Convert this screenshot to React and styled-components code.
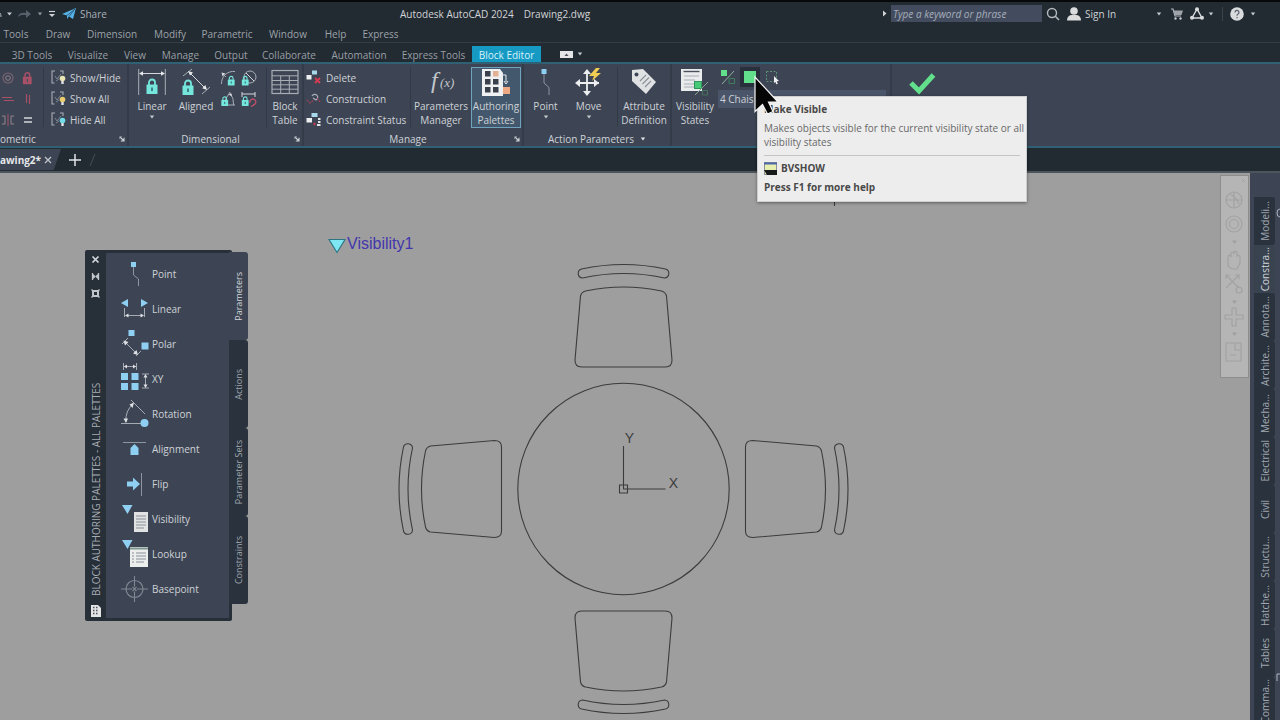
import React from "react";
import styled, { createGlobalStyle, css } from "styled-components";

const c = {
  bar: "#222a32",
  ribbon: "#3d4554",
  line: "#2f6073",
  dark: "#2a323d",
  canvas: "#9e9e9e",
  text: "#ced2d7",
  mint: "#74e6dc",
  green: "#62e08b",
  sky: "#8fd0f2",
  pink: "#a94f66",
};

const Global = createGlobalStyle`
  *, *::before, *::after { box-sizing: border-box; }
  html, body, #root { height: 100%; }
  body { margin: 0; overflow: hidden; background: ${c.bar}; }
  body, button, input, select {
    font-family: "Open Sans", "Noto Sans", sans-serif;
    font-size: 10px;
    line-height: 14px;
    color: ${c.text};
  }
  button { margin: 0; padding: 0; border: 0; background: none; white-space: nowrap; }
  svg { display: block; flex: none; }
`;

const Shell = styled.div`
  display: flex;
  flex-direction: column;
  height: 100vh;
  overflow: hidden;
`;

/* ---------- title bar ---------- */
const TitleBar = styled.header`
  display: grid;
  grid-template-columns: 400px 1fr auto;
  align-items: center;
  height: 25px;
  border-top: 2px solid #06080a;
  background: ${c.bar};
`;
const QuickAccess = styled.div`
  display: flex;
  align-items: center;
`;
const Slot = styled.button`
  display: flex;
  flex: none;
  align-items: center;
  justify-content: center;
  width: ${(p) => p.$w}px;
  height: 18px;
`;
const ShareButton = styled.button`
  display: flex;
  align-items: center;
  gap: 3px;
  padding-left: 4px;
  color: #a9b0b8;
`;
const DocTitle = styled.h1`
  display: flex;
  gap: 10px;
  margin: 0;
  font-size: 10px;
  font-weight: 400;
  white-space: nowrap;
  color: #d2d4d6;
`;
const Account = styled.div`
  display: flex;
  align-items: center;
  padding-right: 18px;
`;
const Search = styled.input`
  width: 151px;
  height: 17px;
  padding: 0 2px;
  border: 0;
  background: #434c5e;
  font-style: italic;
  &::placeholder { color: #a5aebb; opacity: 1; }
`;
const SignIn = styled.button`
  display: flex;
  align-items: center;
  gap: 4px;
  width: 86px;
  padding-left: 3px;
`;
const Divider = styled.span`
  width: 16px;
  height: 14px;
  background: linear-gradient(#39424d, #39424d) center / 1px 100% no-repeat;
`;

/* ---------- menu and ribbon tabs ---------- */
const MenuBar = styled.nav`
  display: flex;
  align-items: center;
  height: 18px;
  border-bottom: 1px solid #343d46;
  background: ${c.bar};
`;
const MenuItem = styled.button`
  width: ${(p) => p.$w}px;
  text-align: center;
  color: #9da3a9;
`;
const TabBar = styled.div`
  display: flex;
  height: 21px;
  padding: 3px 0 0 4px;
  border-bottom: 2px solid ${c.line};
  background: ${c.bar};
`;
const RibbonTab = styled.button`
  flex: none;
  width: ${(p) => p.$w}px;
  padding-top: 1px;
  text-align: center;
  color: #999fa5;
  ${(p) =>
    p.$active &&
    css`
      background: #169ac4;
      color: #d6f1fa;
    `}
`;
const TabOptions = styled.button`
  display: flex;
  align-items: center;
  gap: 4px;
  margin-left: 19px;
`;

/* ---------- ribbon ---------- */
const Ribbon = styled.div`
  position: relative;
  z-index: 3;
  display: flex;
  height: 84px;
  background: ${c.ribbon};
  border-bottom: 2px solid ${c.line};
`;
const Panel = styled.section`
  position: relative;
  display: flex;
  flex-direction: column;
  flex: ${(p) => (p.$w ? `none` : `1`)};
  width: ${(p) => (p.$w ? `${p.$w}px` : "auto")};
  border-right: ${(p) => (p.$w ? "2px solid #343b49" : "0")};
`;
const PanelBody = styled.div`
  display: flex;
  height: 68px;
  padding-top: 3px;
`;
const PanelTitle = styled.div`
  position: relative;
  display: flex;
  align-items: center;
  justify-content: ${(p) => (p.$start ? "flex-start" : "center")};
  gap: 6px;
  height: 14px;
  padding-right: ${(p) => (p.$launcher ? 10 : 0)}px;
`;
const Launcher = styled.button`
  position: absolute;
  right: 2px;
  top: 4px;
`;
const SepSlot = styled.span`
  padding-left: 7px;
`;
const Sep = styled.i`
  display: block;
  flex: none;
  width: 1px;
  height: 60px;
  background: #333a47;
`;
const Big = styled.button`
  display: flex;
  flex: none;
  flex-direction: column;
  align-items: center;
  width: ${(p) => p.$w}px;
  height: 61px;
  border: 1px solid ${(p) => (p.$on ? "#6fa3be" : "transparent")};
  background: ${(p) => (p.$on ? "#43586c" : "transparent")};
  text-align: center;
`;
const BigLabel = styled.span`
  margin: 3px 0 2px;
  white-space: pre-line;
`;
const SmallGrid = styled.div`
  display: grid;
  grid-template-columns: repeat(2, ${(p) => p.$size}px);
  grid-auto-rows: 21px;
  place-items: center;
  align-content: start;
`;
const Rows = styled.div`
  display: flex;
  flex-direction: column;
  width: ${(p) => p.$w}px;
`;
const RowButton = styled.button`
  display: flex;
  align-items: center;
  gap: 4px;
  height: 21px;
  padding-left: ${(p) => p.$left}px;
`;
const StateTools = styled.div`
  display: flex;
  flex-direction: column;
  gap: 3px;
`;
const ToolLine = styled.div`
  display: flex;
  gap: 2px;
`;
const Tool = styled.button`
  display: grid;
  place-items: center;
  width: 20px;
  height: 20px;
  background: ${(p) => (p.$on ? "#27303b" : "transparent")};
`;
const StateSelect = styled.select`
  width: 168px;
  height: 18px;
  padding: 0 2px;
  border: 0;
  appearance: none;
  background: #4b5569;
`;
const CloseEditor = styled.button`
  display: grid;
  place-items: center;
  width: 60px;
  height: 32px;
`;

/* ---------- tooltip ---------- */
const Tooltip = styled.div`
  position: absolute;
  left: 85px;
  top: 32px;
  width: 270px;
  height: 106px;
  padding: 5px 6px 0;
  border: 1px solid #cfcfcf;
  background: #ededed;
  box-shadow: 0 1px 3px rgba(0, 0, 0, 0.4);
  color: #686868;
  white-space: nowrap;
`;
const TipTitle = styled.strong`
  display: block;
  color: #484848;
`;
const TipText = styled.p`
  margin: 5px 0 6px;
`;
const TipCommand = styled.div`
  display: flex;
  align-items: center;
  gap: 4px;
  height: 25px;
  border-top: 1px solid #c2c5c6;
  font-weight: 700;
  color: #484848;
`;
const Pointer = styled.svg`
  position: absolute;
  left: 81px;
  top: 11px;
`;

/* ---------- document tabs ---------- */
const DocTabs = styled.div`
  display: flex;
  align-items: center;
  height: 25px;
  background: ${c.bar};
  border-bottom: 2px solid #4e545b;
`;
const DocTab = styled.div`
  display: flex;
  align-items: center;
  gap: 3px;
  width: 61px;
  height: 21px;
  background: #3d4554;
  clip-path: polygon(0 0, 100% 0, 88% 100%, 0 100%);
  font-weight: 700;
  color: #e5e7e9;
`;

/* ---------- workspace ---------- */
const Workspace = styled.main`
  display: flex;
  flex: 1;
  min-height: 0;
`;
const Canvas = styled.div`
  position: relative;
  flex: 1;
  overflow: hidden;
  background: ${c.canvas};
`;
const Drawing = styled.svg`
  position: absolute;
  left: 0;
  top: 0;
`;
const NavBar = styled.div`
  position: absolute;
  right: 1px;
  top: 2px;
  width: 29px;
  height: 203px;
  border: 1px solid #8d8d8d;
  background: #b5b5b5;
`;

const Palette = styled.aside`
  position: absolute;
  left: 85px;
  top: 77px;
  display: flex;
  align-items: flex-start;
`;
const PaletteFrame = styled.div`
  display: flex;
  width: 147px;
  height: 371px;
  padding: 3px 3px 3px 0;
  border-radius: 2px;
  background: #272f39;
`;
const Rail = styled.div`
  display: flex;
  flex-direction: column;
  align-items: center;
  gap: 8px;
  width: 21px;
  padding-top: 2px;
`;
const Sideways = styled.span`
  writing-mode: vertical-rl;
  transform: rotate(180deg);
  white-space: nowrap;
  font-size: ${(p) => p.$size || 9}px;
  line-height: 14px;
`;
const RailTitle = styled(Sideways)`
  flex: 1;
  color: #a8adb3;
`;
const PaletteList = styled.div`
  flex: 1;
  padding-top: 3px;
  background: ${c.ribbon};
`;
const PaletteItem = styled.button`
  display: flex;
  align-items: center;
  gap: 3px;
  width: 100%;
  height: 35px;
  padding-left: 15px;
`;
const PaletteTabs = styled.div`
  position: relative;
  width: 19px;
  margin: 2px 0 0 -3px;
`;
const SideTab = styled.button`
  display: grid;
  place-items: center;
  width: 100%;
  height: ${(p) => p.$h}px;
  overflow: hidden;
  border-radius: 0 3px 3px 0;
  background: ${(p) => (p.$on ? p.$tone || c.ribbon : c.dark)};
  color: ${(p) => (p.$on ? "#d2d6da" : "#a0a7b0")};
`;

const Dock = styled.aside`
  display: flex;
  width: 30px;
  padding-left: 4px;
  overflow: hidden;
  background: ${c.ribbon};
`;
const DockTabs = styled.div`
  flex: none;
  width: 21px;
  padding-top: 24px;
`;
const DockBody = styled.div`
  display: flex;
  flex-direction: column;
  flex: 1;
  justify-content: space-between;
  padding: 32px 0 38px 1px;
  overflow: hidden;
`;

/* ---------- drawings ---------- */
const Caret = ({ color = "#c6cacf" }) => (
  <svg width="6" height="4" viewBox="0 0 6 4" aria-hidden="true">
    <path d="M0.8 0.5h4.4L3 3.4z" fill={color} />
  </svg>
);
const Art = ({ w, h, children, ...rest }) => (
  <svg width={w} height={h} viewBox={`0 0 ${w} ${h}`} fill="none" aria-hidden="true" {...rest}>
    {children}
  </svg>
);
const Lock = ({ x, y, s = 1, color = c.mint }) => (
  <g transform={`translate(${x} ${y}) scale(${s})`}>
    <path d="M3 7V4.5a3 3 0 0 1 6 0V7" stroke={color} strokeWidth="1.8" fill="none" />
    <rect x="0.5" y="6.5" width="11" height="9.5" rx="0.6" fill={color} />
    <path d="M6 9.5v3.5" stroke="#2b5560" strokeWidth="1.4" />
  </g>
);
const LauncherIcon = () => (
  <Art w={6} h={6}>
    <path d="M1 1l4 4M5 1.8V5H1.8" stroke="#d0d4d8" strokeWidth="1.1" />
    <path d="M0.6 3V0.6H3" stroke="#8b929c" strokeWidth="0.8" />
  </Art>
);
const LinearIcon = () => (
  <Art w={28} h={28}>
    <path d="M0.7 1v26M27.3 1v26" stroke="#a9adb5" />
    <path d="M2 5.5h24" stroke="#d5d8dc" />
    <path d="M1 5.5l4-2.2v4.4zM27 5.5l-4-2.2v4.4z" fill="#e6e8ea" />
    <Lock x={8} y={10} />
  </Art>
);
const AlignedIcon = () => (
  <Art w={30} h={28}>
    <path d="M2 8l9-7M21 26l8-7" stroke="#a9adb5" />
    <path d="M9 5l15 15" stroke="#d5d8dc" />
    <path d="M7 3l5 1.6-3 3zM26 22l-1.6-5-3.2 3.2z" fill="#e6e8ea" />
    <Lock x={1} y={11} />
  </Art>
);
const RadialIcon = () => (
  <Art w={16} h={16}>
    <path d="M1.5 14A12 12 0 0 1 15 1.5M2 3l4 4" stroke="#a9adb5" />
    <path d="M1.5 2.5l4 1-3 3z" fill="#d5d8dc" />
    <Lock x={7.5} y={5.5} s={0.62} />
  </Art>
);
const DiameterIcon = () => (
  <Art w={16} h={16}>
    <circle cx="9" cy="7" r="6" stroke="#a9adb5" />
    <path d="M5 3l8 8" stroke="#d5d8dc" />
    <Lock x={0.5} y={5.5} s={0.62} />
  </Art>
);
const AngularIcon = () => (
  <Art w={16} h={16}>
    <path d="M10 1L2 14h13M10 2q4 5 3.6 12" stroke="#a9adb5" />
    <path d="M8.5 3.5l3-1 .5 3z" fill="#d5d8dc" />
    <Lock x={1} y={5} s={0.62} />
  </Art>
);
const ConvertIcon = () => (
  <Art w={16} h={16}>
    <path d="M1 1v5M14 1v5M1 3h13" stroke="#d5d8dc" />
    <path d="M9 12a3 3 0 1 1 3 2M13 14l-3 1.5M12 14" stroke="#c4506a" strokeWidth="1.3" />
    <Lock x={0.5} y={5} s={0.62} />
  </Art>
);
const TableIcon = () => (
  <Art w={28} h={28}>
    <rect x="1" y="2.5" width="26" height="23" stroke="#a9adb5" strokeWidth="1.2" />
    <path d="M1 7.8h26M1 12.5h26M1 16.8h26M1 21.2h26M9.7 7.8v17.7M18.3 7.8v17.7" stroke="#a9adb5" />
  </Art>
);
const BulbRow = ({ bulb }) => (
  <Art w={15} h={15}>
    <path d="M4 1H1v12h2.5M9 1h3v3" stroke="#a9adb5" strokeWidth="1.1" />
    <path d="M4 6l2 3 4-5M5 11l3-2" stroke="#7c8592" />
    <circle cx="11.5" cy="8.5" r="2.8" fill={bulb} />
    <path d="M10.3 11h2.4v3h-2.4z" fill="#e1e3e5" />
  </Art>
);
const DeleteIcon = () => (
  <Art w={16} h={15}>
    <rect x="6" y="0.5" width="5" height="4" fill="#a9d8ea" />
    <rect x="0.5" y="5" width="5" height="4.5" fill="#eceef0" />
    <path d="M9 8l5 5M14 8l-5 5" stroke="#d13c52" strokeWidth="2" />
  </Art>
);
const ConstructionIcon = () => (
  <Art w={16} h={15}>
    <path d="M6 5a3 3 0 1 1 4 4M7 7l3 2" stroke="#aab0bb" strokeWidth="1.2" />
    <path d="M1 9l3 3 4-3M11 7l3 4" stroke="#a8415a" strokeWidth="1.1" strokeDasharray="2 1" />
  </Art>
);
const StatusIcon = () => (
  <Art w={16} h={15}>
    <rect x="5.5" y="1" width="6" height="4" fill="#a9d8ea" />
    <rect x="0.5" y="6" width="5.5" height="4.5" fill="#eceef0" />
    <path d="M7.5 12h2" stroke="#d13c52" strokeWidth="2.4" />
    <path d="M12 7h2.5M12 10h2.5M11 13h3.5" stroke="#e1e3e5" strokeWidth="1.8" />
  </Art>
);
const FxIcon = () => (
  <Art w={34} h={28} fill="#c3c7cd" fontFamily="Liberation Serif, serif" fontStyle="italic">
    <text x="7" y="20" fontSize="24">f</text>
    <text x="16" y="19" fontSize="13">(x)</text>
  </Art>
);
const AuthoringIcon = () => (
  <Art w={30} h={28}>
    <path d="M1 1h18l3 4v23H1z" fill="#eef0f1" />
    {[4, 12, 20].map((y, r) =>
      [4, 12].map((x, k) => (
        <rect key={`${x}-${y}`} x={x} y={y - 1} width="5.5" height="5.5" fill={r === 0 && k === 1 ? "#e3b295" : "#39404c"} />
      ))
    )}
    <path d="M20 7h5v7M23 13l2 3 2-3" stroke="#e8eaec" />
    <rect x="22" y="19" width="7" height="7" fill="#f0aa83" />
  </Art>
);
const PointIcon = () => (
  <Art w={14} h={28}>
    <rect x="2.5" y="1" width="5" height="5" fill={c.sky} />
    <path d="M5 6v9l5 4.5V27" stroke="#8d95a0" />
  </Art>
);
const MoveIcon = () => (
  <Art w={28} h={28}>
    <path d="M12 4v22M2 15h22" stroke="#eceef0" strokeWidth="1.8" />
    <path d="M12 1l4 5H8zM12 28l4-5H8zM0 15l5-4v8zM24 15l-5-4v8z" fill="#eceef0" />
    <path d="M21 0l-7 8h5l-2 5 9-8h-5l4-5z" fill="#f1cd53" />
  </Art>
);
const TagIcon = () => (
  <Art w={28} h={28}>
    <path d="M2 2l11-1 13 13-10 12L2 13z" fill="#dfe1e3" />
    <circle cx="6.5" cy="6.5" r="2" fill="#3d4554" />
    <path d="M10 13l6-6M12.5 16l6.5-6.5M15 19l6-6" stroke="#8b9097" strokeWidth="1.1" />
  </Art>
);
const VisibilityIcon = () => (
  <Art w={30} h={28}>
    <path d="M1 1h21v22H1z" fill="#e9ebec" />
    <path d="M3.5 3.5h16" stroke="#4a515c" strokeWidth="1.4" />
    <path d="M4 8h15M4 12h11M4 16h10M4 19h10" stroke="#a8acb1" />
    <rect x="14.5" y="13.5" width="7" height="7" fill="#48c978" stroke="#2f9658" />
    <path d="M15 27L28 14" stroke="#81a28f" />
    <path d="M22.5 22.5h5v4.5h-5z" stroke="#45705b" />
  </Art>
);
const ModeIcon = () => (
  <Art w={16} h={16}>
    <rect x="1" y="1" width="6" height="6" fill={c.green} />
    <path d="M2 15L14 2" stroke="#8cb39b" />
    <path d="M9 9.5h5.5v5H9z" stroke="#3f7d5c" />
  </Art>
);
const ShowIcon = () => (
  <Art w={14} h={14}>
    <rect x="1" y="1" width="12" height="12" fill={c.green} />
  </Art>
);
const HideIcon = () => (
  <Art w={15} h={16}>
    <rect x="1.5" y="2.5" width="10" height="10" stroke="#5b9276" strokeDasharray="2 1.5" />
    <path d="M9 7l5 5-2.2.3 1 2.7-1.5.3-1-2.5L9 14.3z" fill="#eef0f1" />
  </Art>
);

const paletteArt = {
  Point: (
    <>
      <rect x="10" y="4" width="5" height="5" fill={c.sky} />
      <path d="M12.5 9v8l5 4v7" stroke="#8d95a0" />
    </>
  ),
  Linear: (
    <>
      <path d="M7 6v8l-7-4zM20 6v8l7-4z" fill={c.sky} />
      <path d="M3.5 15v9M23.5 15v9M5 22.5h17" stroke="#a5abb3" />
      <path d="M4 22.5l3.5-2v4zM23 22.5l-3.5-2v4z" fill="#dfe1e4" />
    </>
  ),
  Polar: (
    <>
      <rect x="7.5" y="2" width="6" height="6" fill={c.sky} />
      <rect x="20.5" y="14.5" width="7" height="7" fill={c.sky} />
      <path d="M1 16l6-6M15 28l5-5M4 14l12 12" stroke="#a5abb3" />
      <path d="M2.5 12.5l5 1.5-3.5 3.5zM17 27l-1.5-5-3.5 3.5z" fill="#dfe1e4" />
    </>
  ),
  XY: (
    <>
      <path d="M2.5 0v7M15.5 0v7M3 3.5h12M21 11h7M21 25h7M24.5 12v12" stroke="#a5abb3" />
      <path d="M3 3.5l3-2v4zM15 3.5l-3-2v4zM24.5 11l-2 3.5h4zM24.5 25l-2-3.5h4z" fill="#dfe1e4" />
      <path d="M0 10h7v7H0zM10.5 10h7v7h-7zM0 20h7v7H0zM10.5 20h7v7h-7z" fill={c.sky} />
    </>
  ),
  Rotation: (
    <>
      <path d="M0 25.5h22M10 2l14 14M5 24Q4 13 12 6" stroke="#a5abb3" />
      <path d="M13 4.5l-4.5 2 3 3.5zM5 25l-2.5-4.5h4.5z" fill="#dfe1e4" />
      <circle cx="23.5" cy="25" r="4" fill={c.sky} />
    </>
  ),
  Alignment: (
    <>
      <path d="M2 9.5h23" stroke="#8d95a0" />
      <path d="M9.5 22v-7l4-4 4 4v7z" fill={c.sky} />
    </>
  ),
  Flip: (
    <>
      <path d="M6 13.5h6v-4l7 6.5-7 6.5v-4H6z" fill={c.sky} />
      <path d="M20.5 5v23" stroke="#8d95a0" />
    </>
  ),
  Visibility: (
    <>
      <path d="M1 2h10.5l-5 9z" fill={c.sky} />
      <rect x="13" y="9" width="14" height="20" fill="#e0e2e3" />
      <path d="M15 13h10M15 16h10M15 19h10M15 22h10M15 25h8" stroke="#8a8f96" />
    </>
  ),
  Lookup: (
    <>
      <path d="M1 2h10.5l-5 9z" fill={c.sky} />
      <rect x="9" y="9" width="18" height="20" fill="#eceded" />
      <path d="M9 10.5h18" stroke="#7c958f" strokeWidth="2" />
      <path d="M11 15h2M11 18h2M11 21h2M11 24h2M15 15h10M15 18h10M15 21h10M15 24h8" stroke="#8a8f96" />
    </>
  ),
  Basepoint: (
    <>
      <circle cx="13.5" cy="16" r="8.5" stroke="#7f8792" strokeWidth="1.2" />
      <path d="M0 16h11M16 16h11M13.5 3v10.5M13.5 18.5V29M11.5 14l4 4M15.5 14l-4 4" stroke="#7f8792" strokeWidth="1.1" />
    </>
  ),
};

const Chair = ({ turn }) => (
  <g transform={`rotate(${turn})`}>
    <path d="M-42-220Q0-229 42-220A4.6 4.6 0 0 1 41-211Q0-220-41-211A4.6 4.6 0 0 1-42-220Z" />
    <path d="M-38-198Q0-206 38-198Q42-197 43-193L48.5-129Q48.5-122 42-122H-42Q-48.5-122-48.5-129L-43-193Q-42-197-38-198Z" />
  </g>
);

const menus = [["Tools", 32], ["Draw", 52], ["Dimension", 56], ["Modify", 60], ["Parametric", 54], ["Window", 68], ["Help", 27], ["Express", 63]];
const tabs = [["3D Tools", 56], ["Visualize", 56], ["View", 38], ["Manage", 53], ["Output", 48], ["Collaborate", 68], ["Automation", 72], ["Express Tools", 77], ["Block Editor", 69, true]];
const dock = ["Modeli...", "Constra...", "Annota...", "Archite...", "Mecha...", "Electrical", "Civil", "Structu...", "Hatche...", "Tables", "Comma..."];

export default function App() {
  return (
    <Shell>
      <Global />
      <TitleBar>
        <QuickAccess>
          <Slot $w={14} aria-label="Undo history">
            <Art w={14} h={10}>
              <path d="M0 4q1 1 1 4" stroke="#b5bac0" />
              <path d="M7 3.5h5l-2.5 3z" fill="#c6cacf" />
            </Art>
          </Slot>
          <Slot $w={20} aria-label="Redo">
            <Art w={14} h={9}>
              <path d="M1 8q1-5 8-4V1l5 4-5 4V6Q4 5 1 8z" fill="#59626c" />
            </Art>
          </Slot>
          <Slot $w={12} aria-label="Redo history"><Caret color="#8d939a" /></Slot>
          <Slot $w={12} aria-label="Customize toolbar">
            <Art w={8} h={8}><path d="M1 1.5h6" stroke="#d0d3d6" strokeWidth="1.2" /><path d="M1 4h6L4 7z" fill="#d0d3d6" /></Art>
          </Slot>
          <ShareButton>
            <Art w={15} h={12}>
              <path d="M0 6L14 0l-3 11-4-2.5L5 11V7.5z" fill="#56b1e6" />
              <path d="M5 7.5L13 1 7 8.5" stroke="#22506f" strokeWidth="0.8" />
            </Art>
            Share
          </ShareButton>
        </QuickAccess>
        <DocTitle><span>Autodesk AutoCAD 2024</span><span>Drawing2.dwg</span></DocTitle>
        <Account>
          <Slot $w={12} aria-label="Collapse search"><Art w={7} h={7}><path d="M1 0.5v6l3.5-3z" fill="#d0d3d6" /></Art></Slot>
          <Search aria-label="Search" placeholder="Type a keyword or phrase" />
          <Slot $w={22} aria-label="Find">
            <Art w={14} h={14}><circle cx="6" cy="6" r="4.5" stroke="#b4b9be" strokeWidth="1.4" /><path d="M9 9l4 4" stroke="#b4b9be" strokeWidth="1.6" /></Art>
          </Slot>
          <SignIn>
            <Art w={14} h={14}><circle cx="7" cy="4" r="3.8" fill="#d9dbdd" /><path d="M0 13.5q0-5 4.5-5.5h5q4.5.5 4.5 5.5z" fill="#d9dbdd" /></Art>
            Sign In
          </SignIn>
          <Slot $w={18} aria-label="Account menu"><Caret /></Slot>
          <Slot $w={18} aria-label="App store">
            <Art w={12} h={12}><path d="M0 1h2l2 7h6" stroke="#b4b9be" strokeWidth="1.2" /><path d="M2.5 2.5H12L10.5 7H4z" fill="#9fa4aa" /><circle cx="4.5" cy="10.5" r="1.2" fill="#c4c8cc" /><circle cx="9.5" cy="10.5" r="1.2" fill="#c4c8cc" /></Art>
          </Slot>
          <Slot $w={22} aria-label="Autodesk app">
            <Art w={14} h={13}><path d="M7 2L2 11h10z" stroke="#d9dbdd" strokeWidth="1.4" /><circle cx="7" cy="2.2" r="2" fill="#d9dbdd" /><circle cx="2" cy="10.8" r="2" fill="#d9dbdd" /><circle cx="12" cy="10.8" r="2" fill="#d9dbdd" /></Art>
          </Slot>
          <Slot $w={6} aria-label="App menu"><Caret /></Slot>
          <Divider />
          <Slot $w={14} aria-label="Help">
            <Art w={14} h={14}><circle cx="7" cy="7" r="6.8" fill="#d9dbdd" /><path d="M5 5.4a2 2 0 1 1 3 1.7q-1 .6-1 1.6M7 10v1.3" stroke="#59606a" strokeWidth="1.2" /></Art>
          </Slot>
          <Slot $w={18} aria-label="Help menu"><Caret /></Slot>
        </Account>
      </TitleBar>

      <MenuBar>
        {menus.map(([name, w]) => <MenuItem key={name} $w={w}>{name}</MenuItem>)}
      </MenuBar>

      <TabBar>
        {tabs.map(([name, w, on]) => <RibbonTab key={name} $w={w} $active={on}>{name}</RibbonTab>)}
        <TabOptions aria-label="Ribbon display">
          <Art w={13} h={7}><rect width="13" height="7" fill="#e3e5e7" /><path d="M4.5 5l2-2.5 2 2.5z" fill="#4b525c" /></Art>
          <Caret />
        </TabOptions>
      </TabBar>

      <Ribbon>
        <Panel $w={129}>
          <PanelBody>
            <SmallGrid $size={18}>
              <Art w={14} h={14}><circle cx="6" cy="7" r="5" stroke="#7d6674" strokeWidth="1.1" /><circle cx="6" cy="7" r="2.3" stroke="#94818d" /></Art>
              <Art w={14} h={14}><Lock x={2.5} y={0.5} s={0.8} color={c.pink} /></Art>
              <Art w={14} h={14}><path d="M0 5.5h10M2 8.5h10" stroke={c.pink} strokeWidth="1.1" /></Art>
              <Art w={14} h={14}><path d="M6.5 2v9M9.5 3v9" stroke={c.pink} strokeWidth="1.1" /></Art>
              <Art w={14} h={14}><path d="M0 3h3v8H0M12 3H9v8h3" stroke="#93848f" /><path d="M6 1v12" stroke={c.pink} /></Art>
              <Art w={14} h={14}><path d="M4 5h8M4 9h8" stroke="#d5d8dc" strokeWidth="1.5" /></Art>
            </SmallGrid>
            <SepSlot><Sep /></SepSlot>
            <Rows $w={84}>
              <RowButton $left={7}><BulbRow bulb="#e9e4b4" />Show/Hide</RowButton>
              <RowButton $left={7}><BulbRow bulb="#eacb6e" />Show All</RowButton>
              <RowButton $left={7}><BulbRow bulb="#6fdce8" />Hide All</RowButton>
            </Rows>
          </PanelBody>
          <PanelTitle $start>ometric<Launcher aria-label="Geometric settings"><LauncherIcon /></Launcher></PanelTitle>
        </Panel>

        <Panel $w={175}>
          <PanelBody>
            <Big $w={46}><LinearIcon /><BigLabel>Linear</BigLabel><Caret /></Big>
            <Big $w={42}><AlignedIcon /><BigLabel>Aligned</BigLabel></Big>
            <SmallGrid $size={21}>
              <RadialIcon /><DiameterIcon /><AngularIcon /><ConvertIcon />
            </SmallGrid>
            <SepSlot><Sep /></SepSlot>
            <Big $w={36}><TableIcon /><BigLabel>{"Block\nTable"}</BigLabel></Big>
          </PanelBody>
          <PanelTitle $launcher>Dimensional<Launcher aria-label="Dimensional settings"><LauncherIcon /></Launcher></PanelTitle>
        </Panel>

        <Panel $w={220}>
          <PanelBody>
            <Rows $w={106}>
              <RowButton $left={2}><DeleteIcon />Delete</RowButton>
              <RowButton $left={2}><ConstructionIcon />Construction</RowButton>
              <RowButton $left={2}><StatusIcon />Constraint Status</RowButton>
            </Rows>
            <Sep />
            <Big $w={60}><FxIcon /><BigLabel>{"Parameters\nManager"}</BigLabel></Big>
            <Big $w={50} $on><AuthoringIcon /><BigLabel>{"Authoring\nPalettes"}</BigLabel></Big>
          </PanelBody>
          <PanelTitle $launcher>Manage<Launcher aria-label="Manage settings"><LauncherIcon /></Launcher></PanelTitle>
        </Panel>

        <Panel $w={148}>
          <PanelBody>
            <Big $w={43}><PointIcon /><BigLabel>Point</BigLabel><Caret /></Big>
            <Big $w={43}><MoveIcon /><BigLabel>Move</BigLabel><Caret /></Big>
            <SepSlot><Sep /></SepSlot>
            <Big $w={52}><TagIcon /><BigLabel>{"Attribute\nDefinition"}</BigLabel></Big>
          </PanelBody>
          <PanelTitle>Action Parameters<Caret color="#e3e5e7" /></PanelTitle>
        </Panel>

        <Panel $w={220}>
          <PanelBody>
            <Big $w={46}><VisibilityIcon /><BigLabel>{"Visibility\nStates"}</BigLabel></Big>
            <StateTools>
              <ToolLine>
                <Tool aria-label="Visibility mode"><ModeIcon /></Tool>
                <Tool $on aria-label="Make visible"><ShowIcon /></Tool>
                <Tool aria-label="Make invisible"><HideIcon /></Tool>
              </ToolLine>
              <StateSelect aria-label="Visibility state" defaultValue="4"><option value="4">4 Chais</option></StateSelect>
            </StateTools>
          </PanelBody>
          <Tooltip role="tooltip">
            <TipTitle>Make Visible</TipTitle>
            <TipText>Makes objects visible for the current visibility state or all<br />visibility states</TipText>
            <TipCommand>
              <Art w={13} h={13}>
                <rect x="0.5" y="0.5" width="12" height="12" fill="#e7efb0" stroke="#8d9299" />
                <path d="M0 1.5h13" stroke="#4c67a8" strokeWidth="2" />
                <path d="M0 8h13v5H3z" fill="#17191b" />
              </Art>
              BVSHOW
            </TipCommand>
            <TipTitle>Press F1 for more help</TipTitle>
          </Tooltip>
          <Pointer width="28" height="42" viewBox="0 0 28 42" aria-hidden="true">
            <path d="M2 2v34.5l7.5-7 5 9.5 5.5-2.5-4.5-9.5H25z" fill="#050505" stroke="#f4f4f4" strokeWidth="1.2" />
          </Pointer>
        </Panel>

        <Panel>
          <PanelBody>
            <CloseEditor aria-label="Close block editor">
              <Art w={28} h={24}><path d="M3 12l8 8L25.5 4" stroke={c.green} strokeWidth="5" /></Art>
            </CloseEditor>
          </PanelBody>
        </Panel>
      </Ribbon>

      <DocTabs>
        <DocTab>
          awing2*
          <button aria-label="Close drawing"><Art w={8} h={8}><path d="M1 1l6 6M7 1L1 7" stroke="#c0c5cb" strokeWidth="1.3" /></Art></button>
        </DocTab>
        <Slot $w={28} aria-label="New drawing"><Art w={12} h={12}><path d="M6 0v12M0 6h12" stroke="#e3e5e7" strokeWidth="1.5" /></Art></Slot>
        <Art w={8} h={14}><path d="M1 13L6 1" stroke="#444c56" /></Art>
      </DocTabs>

      <Workspace>
        <Canvas>
          <Drawing width="1250" height="547" viewBox="0 173 1250 547" fill="none" stroke="#3c3c3c" strokeWidth="1.1">
            <path d="M329 239.5h16l-8 13z" fill="#7fe6f4" stroke="#2b7482" />
            <text x="347" y="249" fontFamily="Liberation Sans, sans-serif" fontSize="16" fill="#4436ac" stroke="none">Visibility1</text>
            <g transform="translate(623.5 489)">
              <circle r="105.7" />
              {[0, 90, 180, 270].map((t) => <Chair key={t} turn={t} />)}
              <path d="M0-43V0H42M-4-4H4V4H-4z" />
              <g fontFamily="Liberation Sans, sans-serif" fontSize="14" fill="#3c3c3c" stroke="none" textAnchor="middle">
                <text x="6" y="-46">Y</text>
                <text x="50" y="-1">X</text>
              </g>
            </g>
            <path d="M834.5 200v6" />
          </Drawing>

          <Palette aria-label="Block authoring palettes">
            <PaletteFrame>
              <Rail>
                <button aria-label="Close palette"><Art w={9} h={9}><path d="M1.5 1.5l6 6M7.5 1.5l-6 6" stroke="#d5d8dc" strokeWidth="1.7" /></Art></button>
                <button aria-label="Auto-hide"><Art w={9} h={9}><path d="M1.5 1v7M7.5 1v7" stroke="#c2c6cb" strokeWidth="1.3" /><path d="M5 4.5l-3-2.5v5zM4 4.5l3-2.5v5z" fill="#c2c6cb" /></Art></button>
                <button aria-label="Properties"><Art w={9} h={9}><rect x="2" y="2" width="5" height="5" stroke="#c2c6cb" strokeWidth="2" /><path d="M0.5 0.5l2 2M8.5 0.5l-2 2M0.5 8.5l2-2M8.5 8.500l-2-2" stroke="#c2c6cb" strokeWidth="1.4" /></Art></button>
                <RailTitle $size={10}>BLOCK AUTHORING PALETTES - ALL PALETTES</RailTitle>
                <Art w={12} h={14}><path d="M1 1h7l3 3v9H1z" fill="#e3e5e7" /><path d="M3 3.5h1.5M6 3.5h1.5M3 6.5h1.5M6 6.5h1.5M3 9.5h1.5M6 9.5h1.5" stroke="#4b525c" strokeWidth="1.5" /></Art>
              </Rail>
              <PaletteList>
                {Object.keys(paletteArt).map((name) => (
                  <PaletteItem key={name}><Art w={28} h={32}>{paletteArt[name]}</Art>{name}</PaletteItem>
                ))}
              </PaletteList>
            </PaletteFrame>
            <PaletteTabs>
              {["Parameters", "Actions", "Parameter Sets", "Constraints"].map((name, i) => (
                <SideTab key={name} $h={88} $on={i === 0}><Sideways>{name}</Sideways></SideTab>
              ))}
            </PaletteTabs>
          </Palette>

          <NavBar aria-label="Navigation bar">
            <Art w={27} h={200} stroke="#a2a2a2" strokeWidth="1.2">
              <path d="M21 3l3 3M24 3l-3 3" strokeWidth="0.8" />
              <circle cx="13" cy="24" r="8" /><path d="M13 16v16M5 24h16M9 18q6 3 9 10" />
              <circle cx="13" cy="48" r="8" /><circle cx="13" cy="48" r="4.5" />
              <path d="M12 65h3l-1.500 2z" fill="#8b8b8b" />
              <path d="M7 90V80q2-2 3 1v-4q2-2 3 1v-2q2-2 3 1v3q2-2 3 1v6l-3 6h-5z" />
              <path d="M5 99l13 13M18 99L5 112M5 103v-4h4M14 99h4v4" /><circle cx="18" cy="114" r="3" />
              <path d="M12 125h3l-1.500 2z" fill="#8b8b8b" />
              <path d="M11 132h4v7h7v4h-7v7h-4v-7H4v-4h7z" />
              <path d="M12 157h3l-1.500 2z" fill="#8b8b8b" />
              <path d="M5 167h15v18H5zM14 167v7h6M9 179h6" />
            </Art>
          </NavBar>
        </Canvas>

        <Dock aria-label="Tool palettes">
          <DockTabs>
            {dock.map((name, i) => (
              <SideTab key={name} $h={48} $on={i === 1} $tone="#394350"><Sideways $size={10}>{name}</Sideways></SideTab>
            ))}
          </DockTabs>
          <DockBody aria-hidden="true">
            <Art w={4} h={14}><path d="M4 4q-3 0-3 4t3 4" stroke="#aeb5bf" /></Art>
            <Art w={4} h={10}><path d="M4 2H1v7" stroke="#aeb5bf" /></Art>
          </DockBody>
        </Dock>
      </Workspace>
    </Shell>
  );
}
